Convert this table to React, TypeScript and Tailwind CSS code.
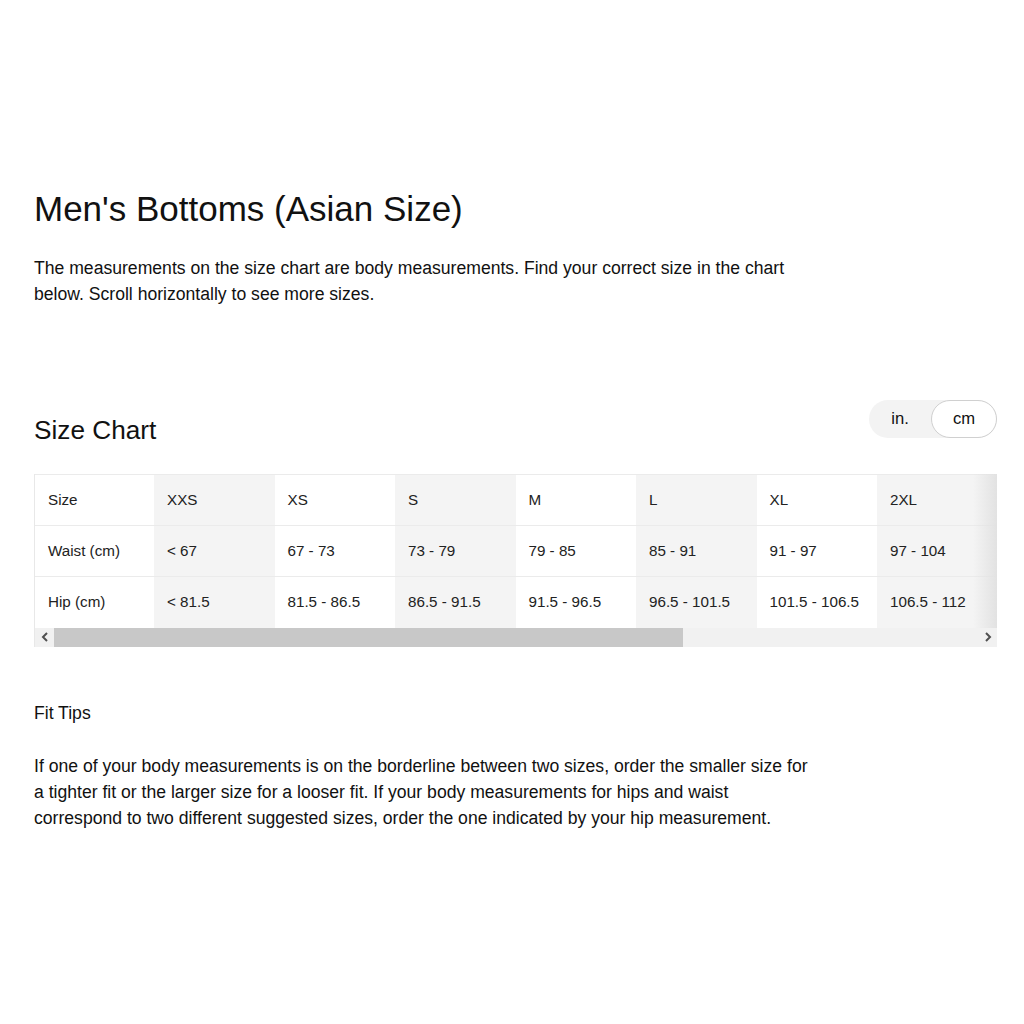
import React, { useState } from "react";

const sizes = [
    { size: "XXS", waist: "< 67", hip: "< 81.5" },
    { size: "XS", waist: "67 - 73", hip: "81.5 - 86.5" },
    { size: "S", waist: "73 - 79", hip: "86.5 - 91.5" },
    { size: "M", waist: "79 - 85", hip: "91.5 - 96.5" },
    { size: "L", waist: "85 - 91", hip: "96.5 - 101.5" },
    { size: "XL", waist: "91 - 97", hip: "101.5 - 106.5" },
    { size: "2XL", waist: "97 - 104", hip: "106.5 - 112" },
];

const App = () => {
    const [unit, setUnit] = useState("cm");

    return (
        <div
            className="min-h-[1024px] bg-white px-[34px] pt-[187px] text-[#111]"
            style={{ fontFamily: '"Liberation Sans", Arial, sans-serif' }}
        >
            <h1 className="text-[35px] leading-[44px]">Men's Bottoms (Asian Size)</h1>
            <p className="mt-[24px] max-w-[777px] text-[17.6px] leading-[26px]">
                The measurements on the size chart are body measurements. Find your correct size in the chart
                below. Scroll horizontally to see more sizes.
            </p>

            <div className="mt-[93px] flex items-start justify-between">
                <h2 className="mt-[13px] text-[26.2px] leading-[34px]">Size Chart</h2>
                <div className="mr-[-7px] flex h-[38px] w-[128px] items-center rounded-full bg-[#f3f3f3] text-[16.6px]">
                    <button
                        onClick={() => setUnit("in")}
                        className={
                            unit === "in"
                                ? "h-[38px] w-[62px] rounded-full border border-[#d0d0d0] bg-white"
                                : "h-[38px] w-[62px]"
                        }
                    >
                        in.
                    </button>
                    <button
                        onClick={() => setUnit("cm")}
                        className={
                            unit === "cm"
                                ? "h-[38px] w-[66px] rounded-full border border-[#d0d0d0] bg-white"
                                : "h-[38px] w-[66px]"
                        }
                    >
                        cm
                    </button>
                </div>
            </div>

            <div className="mr-[-7px] mt-[27px] border-l border-[#e8e8e8]">
                <div className="relative overflow-hidden">
                    <table className="border-collapse text-[15.2px] text-[#222]">
                        <tbody>
                            <tr className="h-[51px] border-t border-b border-[#ebebeb]">
                                <td className="w-[119px] min-w-[119px] pl-[13px]">Size</td>
                                {sizes.map((s, i) => (
                                    <td
                                        key={s.size}
                                        className={
                                            i % 2 === 0
                                                ? "w-[120.5px] min-w-[120.5px] bg-[#f4f4f4] pl-[13px]"
                                                : "w-[120.5px] min-w-[120.5px] pl-[13px]"
                                        }
                                    >
                                        {s.size}
                                    </td>
                                ))}
                            </tr>
                            <tr className="h-[51px] border-b border-[#ebebeb]">
                                <td className="pl-[13px]">Waist (cm)</td>
                                {sizes.map((s, i) => (
                                    <td
                                        key={s.size}
                                        className={i % 2 === 0 ? "bg-[#f4f4f4] pl-[13px]" : "pl-[13px]"}
                                    >
                                        {s.waist}
                                    </td>
                                ))}
                            </tr>
                            <tr className="h-[51px]">
                                <td className="pl-[13px]">Hip (cm)</td>
                                {sizes.map((s, i) => (
                                    <td
                                        key={s.size}
                                        className={
                                            i % 2 === 0
                                                ? "whitespace-nowrap bg-[#f4f4f4] pl-[13px]"
                                                : "whitespace-nowrap pl-[13px]"
                                        }
                                    >
                                        {s.hip}
                                    </td>
                                ))}
                            </tr>
                        </tbody>
                    </table>
                    {/* fade on the right edge */}
                    <div className="pointer-events-none absolute right-0 top-0 h-full w-[24px] bg-gradient-to-r from-transparent to-[#e2e2e2]" />
                </div>

                {/* scrollbar */}
                <div className="flex h-[19px] items-center bg-[#f1f1f1]">
                    <div className="flex h-full w-[19px] items-center justify-center">
                        <svg width="8" height="10" viewBox="0 0 8 10">
                            <polyline points="6,1 2,5 6,9" fill="none" stroke="#505050" strokeWidth="2" />
                        </svg>
                    </div>
                    <div className="h-full w-[629px] bg-[#c8c8c8]" />
                    <div className="flex-1" />
                    <div className="flex h-full w-[19px] items-center justify-center">
                        <svg width="8" height="10" viewBox="0 0 8 10">
                            <polyline points="2,1 6,5 2,9" fill="none" stroke="#505050" strokeWidth="2" />
                        </svg>
                    </div>
                </div>
            </div>

            <h3 className="mt-[54px] text-[17.6px] leading-[24px]">Fit Tips</h3>
            <p className="mt-[28px] max-w-[777px] text-[17.6px] leading-[26px]">
                If one of your body measurements is on the borderline between two sizes, order the smaller size for
                a tighter fit or the larger size for a looser fit. If your body measurements for hips and waist
                correspond to two different suggested sizes, order the one indicated by your hip measurement.
            </p>
        </div>
    );
};

export default App;
